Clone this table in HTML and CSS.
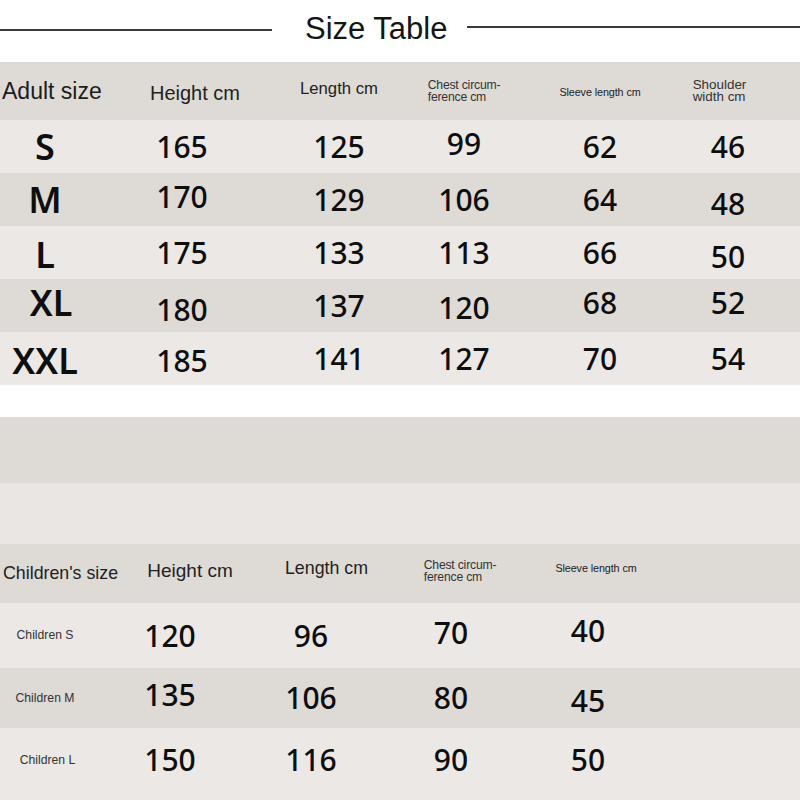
FILE: index.html
```html
<!DOCTYPE html>
<html lang="en">
<head>
<meta charset="utf-8">
<title>Size Table</title>
<link rel="stylesheet" href="styles.css">
</head>
<body>
<div class="page">
  <div class="title-bar">
    <span class="rule rule-left"></span>
    <h1 class="title">Size Table</h1>
    <span class="rule rule-right"></span>
  </div>

  <div class="adult">
    <div class="row head dark">
      <div class="hd h-size">Adult size</div>
      <div class="hd h-height">Height cm</div>
      <div class="hd h-length">Length cm</div>
      <div class="hd h-chest">Chest circum-<br>ference cm</div>
      <div class="hd h-sleeve">Sleeve length cm</div>
      <div class="hd h-shoulder">Shoulder<br>width cm</div>
    </div>
    <div class="row light">
      <div class="sz">S</div>
      <div class="num">165</div>
      <div class="num">125</div>
      <div class="num u">99</div>
      <div class="num">62</div>
      <div class="num">46</div>
    </div>
    <div class="row dark">
      <div class="sz">M</div>
      <div class="num u">170</div>
      <div class="num">129</div>
      <div class="num">106</div>
      <div class="num">64</div>
      <div class="num dd">48</div>
    </div>
    <div class="row light">
      <div class="sz d">L</div>
      <div class="num">175</div>
      <div class="num">133</div>
      <div class="num">113</div>
      <div class="num">66</div>
      <div class="num dd">50</div>
    </div>
    <div class="row dark">
      <div class="sz u xl">XL</div>
      <div class="num dd">180</div>
      <div class="num">137</div>
      <div class="num d">120</div>
      <div class="num u">68</div>
      <div class="num u">52</div>
    </div>
    <div class="row light">
      <div class="sz d">XXL</div>
      <div class="num d">185</div>
      <div class="num">141</div>
      <div class="num">127</div>
      <div class="num">70</div>
      <div class="num">54</div>
    </div>
  </div>

  <div class="gap-white"></div>
  <div class="band dark band-a"></div>
  <div class="band light band-b"></div>

  <div class="kids">
    <div class="row head dark">
      <div class="hd k-size">Children's size</div>
      <div class="hd k-height u">Height cm</div>
      <div class="hd k-length uu">Length cm</div>
      <div class="hd k-chest u">Chest circum-<br>ference cm</div>
      <div class="hd k-sleeve uu">Sleeve length cm</div>
    </div>
    <div class="row light r-s">
      <div class="kname">Children S</div>
      <div class="num">120</div>
      <div class="num">96</div>
      <div class="num u">70</div>
      <div class="num uu">40</div>
    </div>
    <div class="row dark r-m">
      <div class="kname">Children M</div>
      <div class="num u">135</div>
      <div class="num">106</div>
      <div class="num">80</div>
      <div class="num d">45</div>
    </div>
    <div class="row light r-l">
      <div class="kname kl">Children L</div>
      <div class="num">150</div>
      <div class="num">116</div>
      <div class="num">90</div>
      <div class="num">50</div>
    </div>
  </div>
</div>
</body>
</html>
```

FILE: styles.css
```css
html, body {
  margin: 0;
  padding: 0;
  background: #ffffff;
}

.page {
  width: 800px;
  height: 800px;
  overflow: hidden;
  font-family: "Liberation Sans", Arial, sans-serif;
  color: #1a1a1a;
}

/* Title */
.title-bar {
  height: 62px;
  display: flex;
  align-items: flex-start;
}
.rule {
  display: block;
  height: 2px;
  background: #3a3a3a;
}
.rule-left {
  flex: 0 0 272px;
  margin-top: 29px;
}
.rule-right {
  flex: 1 1 auto;
  margin-top: 26px;
  margin-left: 20px;
}
.title {
  margin: 13px 0 0 33px;
  font-weight: 400;
  font-size: 31px;
  line-height: 1;
  color: #151515;
  white-space: nowrap;
}

/* rows */
.row {
  display: grid;
  align-items: center;
}
.adult .row {
  grid-template-columns: 90px 184px 130px 120px 152px 104px 1fr;
  height: 53px;
}
.adult .row.head {
  height: 58px;
}
.kids .row {
  grid-template-columns: 90px 160px 122px 158px 116px 1fr;
}
.kids .row.head { height: 59px; }
.kids .r-s { height: 65px; }
.kids .r-m { height: 60px; }
.kids .r-l { height: 72px; padding-bottom: 8px; box-sizing: border-box; }

.dark { background: #dedad6; }
.light { background: #ebe8e5; }

.gap-white { height: 32px; background: #ffffff; }
.band-a { height: 66px; }
.band-b { height: 61px; background: #e9e6e3; }

/* header cells */
.hd {
  color: #222;
  line-height: 1;
  white-space: nowrap;
  justify-self: center;
}
.h-size {
  justify-self: start;
  margin-left: 2px;
  font-size: 23px;
  color: #1c1c1c;
}
.h-height {
  font-size: 20px;
  margin-left: 26px;
  padding-top: 4px;
}
.h-length {
  font-size: 16.7px;
  padding-bottom: 4px;
}
.h-chest {
  font-size: 12.2px;
  line-height: 12px;
  letter-spacing: -0.2px;
  color: #333;
}
.h-sleeve {
  font-size: 10.8px;
  letter-spacing: -0.1px;
  padding-top: 2px;
}
.h-shoulder {
  font-size: 13.4px;
  line-height: 12px;
  margin-right: 17px;
  color: #333;
}

.k-size {
  justify-self: start;
  margin-left: 3px;
  font-size: 17.8px;
  color: #222;
}
.k-height { font-size: 19px; margin-left: 40px; }
.k-length { font-size: 17.8px; margin-left: 31px; }
.k-chest {
  font-size: 12.2px;
  line-height: 12px;
  letter-spacing: -0.2px;
  margin-left: 18px;
  color: #333;
}
.k-sleeve {
  font-size: 10.8px;
  letter-spacing: -0.1px;
  margin-left: 16px;
}

/* values */
.num, .sz {
  font-family: "Noto Sans", "Noto Sans CJK SC", sans-serif;
  line-height: 1;
  justify-self: center;
  color: #0e0e0e;
}
.num {
  font-size: 30px;
  font-weight: 500;
}
.sz {
  font-size: 36px;
  font-weight: 600;
}
.sz.xl { margin-left: 12px; }

.kname {
  justify-self: center;
  font-size: 12.2px;
  line-height: 1;
  color: #333;
}
.kname.kl { margin-left: 5px; padding-bottom: 0; }

/* small vertical offsets from the source photo */
.u  { padding-bottom: 6px; }
.uu { padding-bottom: 10px; }
.d  { padding-top: 5px; }
.dd { padding-top: 9px; }
```
